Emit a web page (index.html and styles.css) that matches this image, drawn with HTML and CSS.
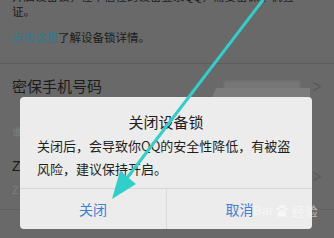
FILE: index.html
```html
<!DOCTYPE html>
<html lang="zh">
<head>
<meta charset="utf-8">
<link rel="stylesheet" href="styles.css">
</head>
<body>
<div class="page">
  <p class="intro">开启设备锁，在不信任的设备登录QQ，需要密保手机验<br>证。</p>
  <p class="more"><span class="link">点击这里</span>了解设备锁详情。</p>
  <div class="rule"></div>
  <div class="row phone">
    <span class="label">密保手机号码</span>
    <span class="masked"></span>
    <span class="chev">&gt;</span>
  </div>
  <div class="faint">谁</div>
  <div class="row zrow">
    <span class="zbig">Z</span>
    <span class="chev lowchev">&gt;</span>
  </div>
  <div class="faint small">Z</div>
  <div class="rule low"></div>

  <div class="strip"></div>
  <div class="dialog">
    <div class="title">关闭设备锁</div>
    <div class="body">关闭后，会导致你QQ的安全性降低，有被盗风险，建议保持开启。</div>
    <div class="buttons">
      <div class="btn">关闭</div>
      <div class="btn">取消</div>
    </div>
  </div>

  <div class="mark">Bai<svg class="paw" width="14" height="14" viewBox="0 0 14 14"><circle cx="3" cy="5" r="1.6"/><circle cx="5.5" cy="2.5" r="1.6"/><circle cx="8.5" cy="2.5" r="1.6"/><circle cx="11" cy="5" r="1.6"/><path d="M7 6c-2.5 0-4.5 3-4.5 5 0 1.5 1.2 2 2.2 2 1 0 1.4-.5 2.3-.5s1.3.5 2.3.5c1 0 2.2-.5 2.2-2 0-2-2-5-4.5-5z"/></svg>经验</div>

  <svg class="arrow" width="334" height="238" viewBox="0 0 334 238">
    <line x1="266" y1="-4" x2="127" y2="178" stroke="#30cfca" stroke-width="3" stroke-linecap="round"/>
    <polygon points="112,199 136,184 120,171" fill="#30cfca"/>
  </svg>
</div>
</body>
</html>
```
FILE: styles.css
```css
html, body {
  margin: 0;
  padding: 0;
}
body {
  width: 334px;
  height: 238px;
  overflow: hidden;
  background: #696969;
  font-family: "Noto Sans CJK SC", "Noto Sans", sans-serif;
  color: #1c1c1c;
}
.page {
  position: relative;
  width: 334px;
  height: 238px;
  overflow: hidden;
}
.intro {
  margin: -11px 0 0 0;
  padding-left: 12px;
  font-size: 11.5px;
  line-height: 15px;
  white-space: nowrap;
}
.more {
  margin: 10.5px 0 0 0;
  padding-left: 12px;
  font-size: 11.5px;
  line-height: 15px;
}
.link {
  color: #2f7a93;
}
.rule {
  height: 1px;
  background: #5d5d5d;
  margin-top: 18px;
}
.row {
  display: flex;
  align-items: center;
  padding: 0 12px;
}
.phone {
  height: 44px;
}
.label {
  font-size: 15px;
  flex: 1;
}
.masked {
  width: 76px;
  height: 9px;
  background: #777;
  margin-right: 12px;
  filter: blur(1px);
}
.chev {
  color: #5a5a5a;
  font-family: "DejaVu Sans", sans-serif;
  font-size: 12px;
  transform: scaleY(1.4);
}
.lowchev {
  margin-top: 20px;
}
.faint {
  padding-left: 12px;
  font-size: 10px;
  line-height: 12px;
  color: #7d7d7d;
  margin-top: 18px;
}
.zrow {
  height: 36px;
  margin-top: 10px;
}
.zbig {
  flex: 1;
  font-family: "Liberation Sans", sans-serif;
  font-size: 14px;
  color: #1a1a1a;
}
.small {
  margin-top: 0;
  font-family: "Liberation Sans", sans-serif;
  font-size: 11px;
}
.low {
  margin-top: 13px;
  background: #5f5f5f;
}
.strip {
  position: absolute;
  left: 212px;
  top: 88px;
  width: 98px;
  height: 10px;
  background: #7c7c7c;
  clip-path: polygon(4px 0, 100% 0, 100% 100%, 0 100%);
}
.dialog {
  position: absolute;
  left: 20px;
  top: 97px;
  width: 292px;
  height: 132px;
  background: #ececec;
  border-radius: 4px;
  display: flex;
  flex-direction: column;
}
.title {
  padding-top: 16px;
  text-align: center;
  font-size: 15px;
  line-height: 18px;
  color: #1e1e1e;
}
.body {
  margin-top: 3px;
  padding: 0 17px 7.5px;
  font-size: 13px;
  line-height: 23px;
  color: #1e1e1e;
  height: 46px;
  border-bottom: 1px solid #d6d6d6;
}
.buttons {
  flex: 1;
  display: grid;
  grid-template-columns: 1fr 1fr;
}
.btn {
  display: flex;
  align-items: center;
  justify-content: center;
  font-size: 14px;
  color: #3f7fd6;
}
.btn + .btn {
  border-left: 1px solid #dadada;
}
.mark {
  position: absolute;
  left: 253px;
  top: 201px;
  display: flex;
  align-items: center;
  gap: 1px;
  font-family: "Liberation Sans", "Noto Sans CJK SC", sans-serif;
  font-size: 13px;
  color: rgba(255, 255, 255, 0.55);
}
.paw {
  fill: rgba(255, 255, 255, 0.55);
  margin: 0 2px;
}
.arrow {
  position: absolute;
  left: 0;
  top: 0;
}
```
